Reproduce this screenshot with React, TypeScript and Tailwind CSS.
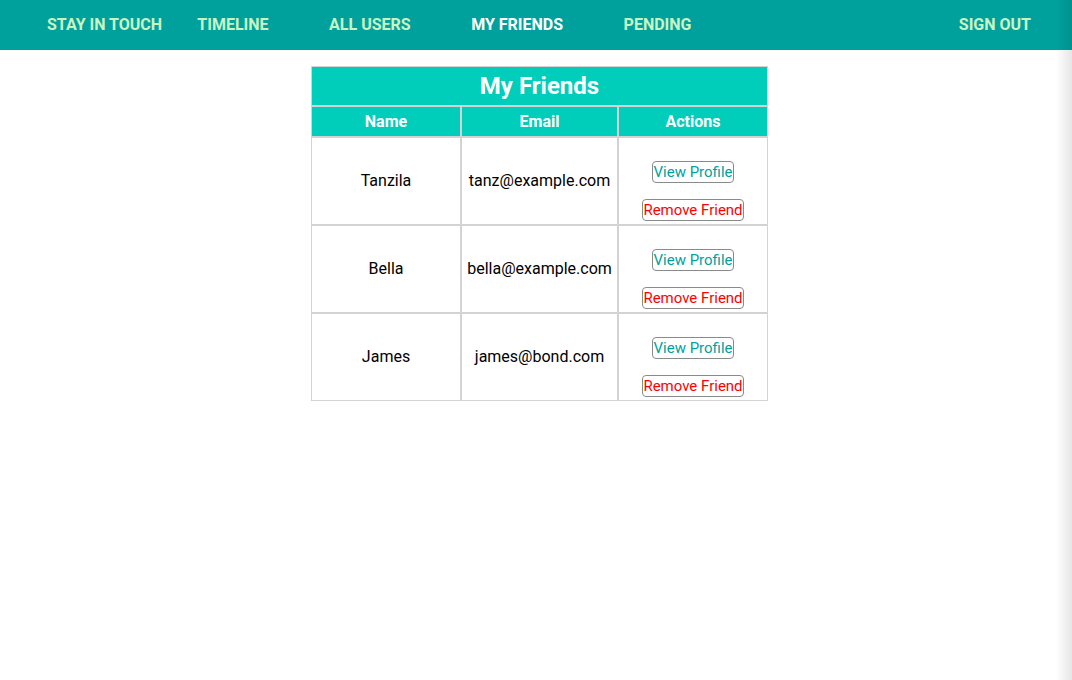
import React from "react";

interface Friend {
  name: string;
  email: string;
}

const friends: Friend[] = [
  { name: "Tanzila", email: "tanz@example.com" },
  { name: "Bella", email: "bella@example.com" },
  { name: "James", email: "james@bond.com" },
];

const links = ["TIMELINE", "ALL USERS", "MY FRIENDS", "PENDING"];

const NavBar: React.FC = () => (
  <nav className="h-[50px] bg-[#00a19d] flex items-center pl-[47px] pr-[41px] font-bold text-[16px]">
    <span className="text-[#c9f5c3]">STAY IN TOUCH</span>
    <ul className="flex ml-[5px]">
      {links.map((l) => (
        <li
          key={l}
          className={`px-[30.25px] ${l === "MY FRIENDS" ? "text-white" : "text-[#c9f5c3]"}`}
        >
          {l}
        </li>
      ))}
    </ul>
    <span className="ml-auto text-[#c9f5c3]">SIGN OUT</span>
  </nav>
);

const FriendsTable: React.FC = () => (
  <div className="pl-[7px]">
    <table className="mx-auto mt-4 border-separate border-spacing-0 text-[16px]">
      <thead>
        <tr>
          <th
            colSpan={3}
            className="h-[40px] border border-[#d3d3d3] bg-[#00cebb] text-white text-[24px] font-bold"
          >
            My Friends
          </th>
        </tr>
        <tr className="bg-[#00cebb] text-white font-bold">
          <th className="w-[150px] h-[31px] border border-[#d3d3d3]">Name</th>
          <th className="w-[157px] border border-[#d3d3d3]">Email</th>
          <th className="w-[150px] border border-[#d3d3d3]">Actions</th>
        </tr>
      </thead>
      <tbody className="text-black">
        {friends.map((f) => (
          <tr key={f.email}>
            <td className="border border-[#d3d3d3] text-center">{f.name}</td>
            <td className="border border-[#d3d3d3] text-center">{f.email}</td>
            <td className="border border-[#d3d3d3] text-center pt-[7px] pb-[3px]">
              <div className="flex flex-col items-center">
                <button className="mt-4 h-[22px] px-0 border border-[#8a8a8a] rounded-[4px] bg-white text-[#00a19d] text-[15px] leading-none">
                  View Profile
                </button>
                <button className="mt-4 h-[22px] px-0 border border-[#8a8a8a] rounded-[4px] bg-white text-[#ff0000] text-[15px] leading-none">
                  Remove Friend
                </button>
              </div>
            </td>
          </tr>
        ))}
      </tbody>
    </table>
  </div>
);

export default function App() {
  return (
    <div className="relative min-h-[680px] bg-white font-['Roboto',sans-serif]">
      <NavBar />
      <FriendsTable />
      <div className="pointer-events-none absolute right-0 top-0 h-full w-[16px] bg-gradient-to-r from-transparent to-black/10" />
    </div>
  );
}
